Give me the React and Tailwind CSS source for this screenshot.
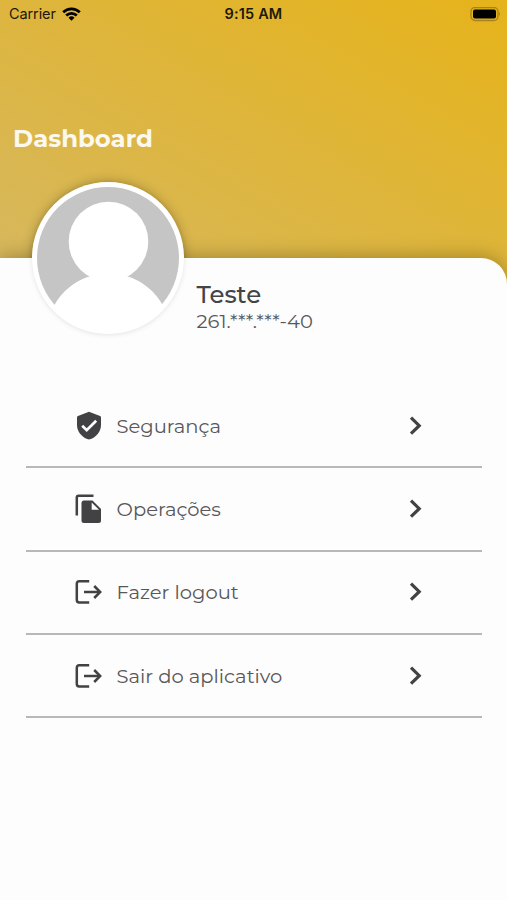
const fontMain = "font-['Montserrat',Inter,sans-serif]";

function ShieldIcon() {
  return (
    <svg width="28" height="30" viewBox="0 0 28 30">
      <path d="M14 .7 25 4.900q1 .4 1 1.400v7.600c0 6.700-4.800 12.600-12 14.600C6.800 26.500 2 20.600 2 13.900V6.300q0-1 1-1.400z" fill="#424143" />
      <path d="m7.200 14.700 4.500 4.500L21.200 9.700" fill="none" stroke="#fdfdfd" strokeWidth="2.700" />
    </svg>
  );
}

function CopyIcon() {
  return (
    <svg width="28" height="30" viewBox="0 0 28 30">
      <path d="M1.800 21.500V3.500q0-1.700 1.700-1.700H18.500" fill="none" stroke="#424143" strokeWidth="2.500" />
      <path d="M9 6.500h8.500L26 15v11.500q0 2.500-2.500 2.500H9q-2.500 0-2.500-2.500V9q0-2.500 2.500-2.500z" fill="#424143" />
      <path d="M16.700 8.400V15.700H24z" fill="#fdfdfd" />
    </svg>
  );
}

function LogoutIcon() {
  return (
    <svg width="28" height="30" viewBox="0 0 28 30" fill="none" stroke="#424143" strokeWidth="2.500">
      <path d="M14.200 4.300H4.200Q1.800 4.300 1.800 6.700V23Q1.800 25.400 4.200 25.400H14.200" />
      <path d="M9 15H25" />
      <path d="m19.200 9 6 6-6 6" />
    </svg>
  );
}

function ChevronIcon() {
  return (
    <svg width="14" height="20" viewBox="0 0 14 20">
      <path d="m2 1.700 8.200 8-8.200 8" fill="none" stroke="#424143" strokeWidth="3.200" />
    </svg>
  );
}

function StatusBar() {
  return (
    <div className="grid h-7 grid-cols-3 items-center pl-[9px] pr-[6px] text-[#1d1808]">
      <div className="flex items-center gap-[6px]">
        <span className="font-[Inter,sans-serif] text-[14.500px] tracking-[-0.100px]">Carrier</span>
        <svg width="19" height="14" viewBox="0 0 19 14" fill="none" stroke="#000" strokeWidth="2.700">
          <path d="M1.200 5.300a11.800 11.800 0 0 1 16.600 0" />
          <path d="M4.200 8.500a7.500 7.500 0 0 1 10.600 0" />
          <path d="M9.500 13.800 6.500 10.800a4.300 4.300 0 0 1 6 0z" fill="#000" stroke="none" />
        </svg>
      </div>
      <span className="mr-[3px] whitespace-nowrap text-center font-[Inter,sans-serif] text-[14.500px] font-semibold tracking-[0.150px]">9:15 AM</span>
      <svg className="justify-self-end" width="31" height="15" viewBox="0 0 31 15">
        <rect x="1" y="0.500" width="27" height="13" rx="4" fill="none" stroke="#a58220" strokeWidth="1.300" />
        <rect x="3" y="2.500" width="23" height="9" rx="2" fill="#000" />
        <path d="M29 5q2 2 0 4z" fill="#a58220" />
      </svg>
    </div>
  );
}

function Avatar() {
  return (
    <>
      {/* the shadow is darker on the part over the header */}
      <div className="absolute left-[32px] top-[-76px] size-[152px] rounded-full shadow-[0_0_12px_rgba(0,0,0,0.270)] [clip-path:inset(-30px_-30px_76px_-30px)]" />
      <div className="absolute left-[32px] top-[-76px] size-[152px] rounded-full bg-white shadow-[0_1px_5px_rgba(0,0,0,0.100)]">
        <svg width="152" height="152" viewBox="0 0 152 152">
          <clipPath id="avatar">
            <circle cx="76" cy="76" r="74" />
          </clipPath>
          <circle cx="76" cy="76" r="71" fill="#c5c5c5" />
          <g clipPath="url(#avatar)" fill="#fff">
            <circle cx="76.500" cy="59.500" r="39.800" />
            <circle cx="76.500" cy="153" r="61.800" />
          </g>
        </svg>
      </div>
    </>
  );
}

const menu = [
  { label: 'Segurança', icon: ShieldIcon },
  { label: 'Operações', icon: CopyIcon },
  { label: 'Fazer logout', icon: LogoutIcon },
  { label: 'Sair do aplicativo', icon: LogoutIcon },
];

export default function App() {
  return (
    <div className={`flex h-[900px] w-[507px] flex-col overflow-hidden bg-[linear-gradient(to_top_right,#d5b862_0%,#e6b31a_100%)] bg-[length:507px_300px] bg-no-repeat ${fontMain}`}>
      <header className="h-[258px] shrink-0">
        <StatusBar />
        <h1 className="pl-[13px] pt-[92px] text-[24.400px] font-bold leading-[36px] text-[#fbf8ee]">Dashboard</h1>
      </header>

      <main className="relative grow rounded-tr-[26px] bg-[#fdfdfd] shadow-[0_-2px_18px_rgba(60,45,0,0.350)]">
        <Avatar />
        <div className="h-[127px] pl-[196.500px] pt-[21px] text-[#444345]">
          <p className="text-[24.400px] font-medium leading-[30px]">Teste</p>
          <p className="text-[19.550px] leading-[24px] text-[#58575a]">261.***.***-40</p>
        </div>

        <ul className="mx-[26px] w-[456px]">
          {menu.map(({ label, icon: Icon }) => (
            <li key={label} className="flex h-[83.330px] items-center border-b-2 border-[#b8b8b8] pl-[49px] pr-[59px]">
              <Icon />
              <span className="ml-[13.500px] grow text-[19.550px] leading-[28px] text-[#58575a]">{label}</span>
              <ChevronIcon />
            </li>
          ))}
        </ul>
      </main>
    </div>
  );
}
